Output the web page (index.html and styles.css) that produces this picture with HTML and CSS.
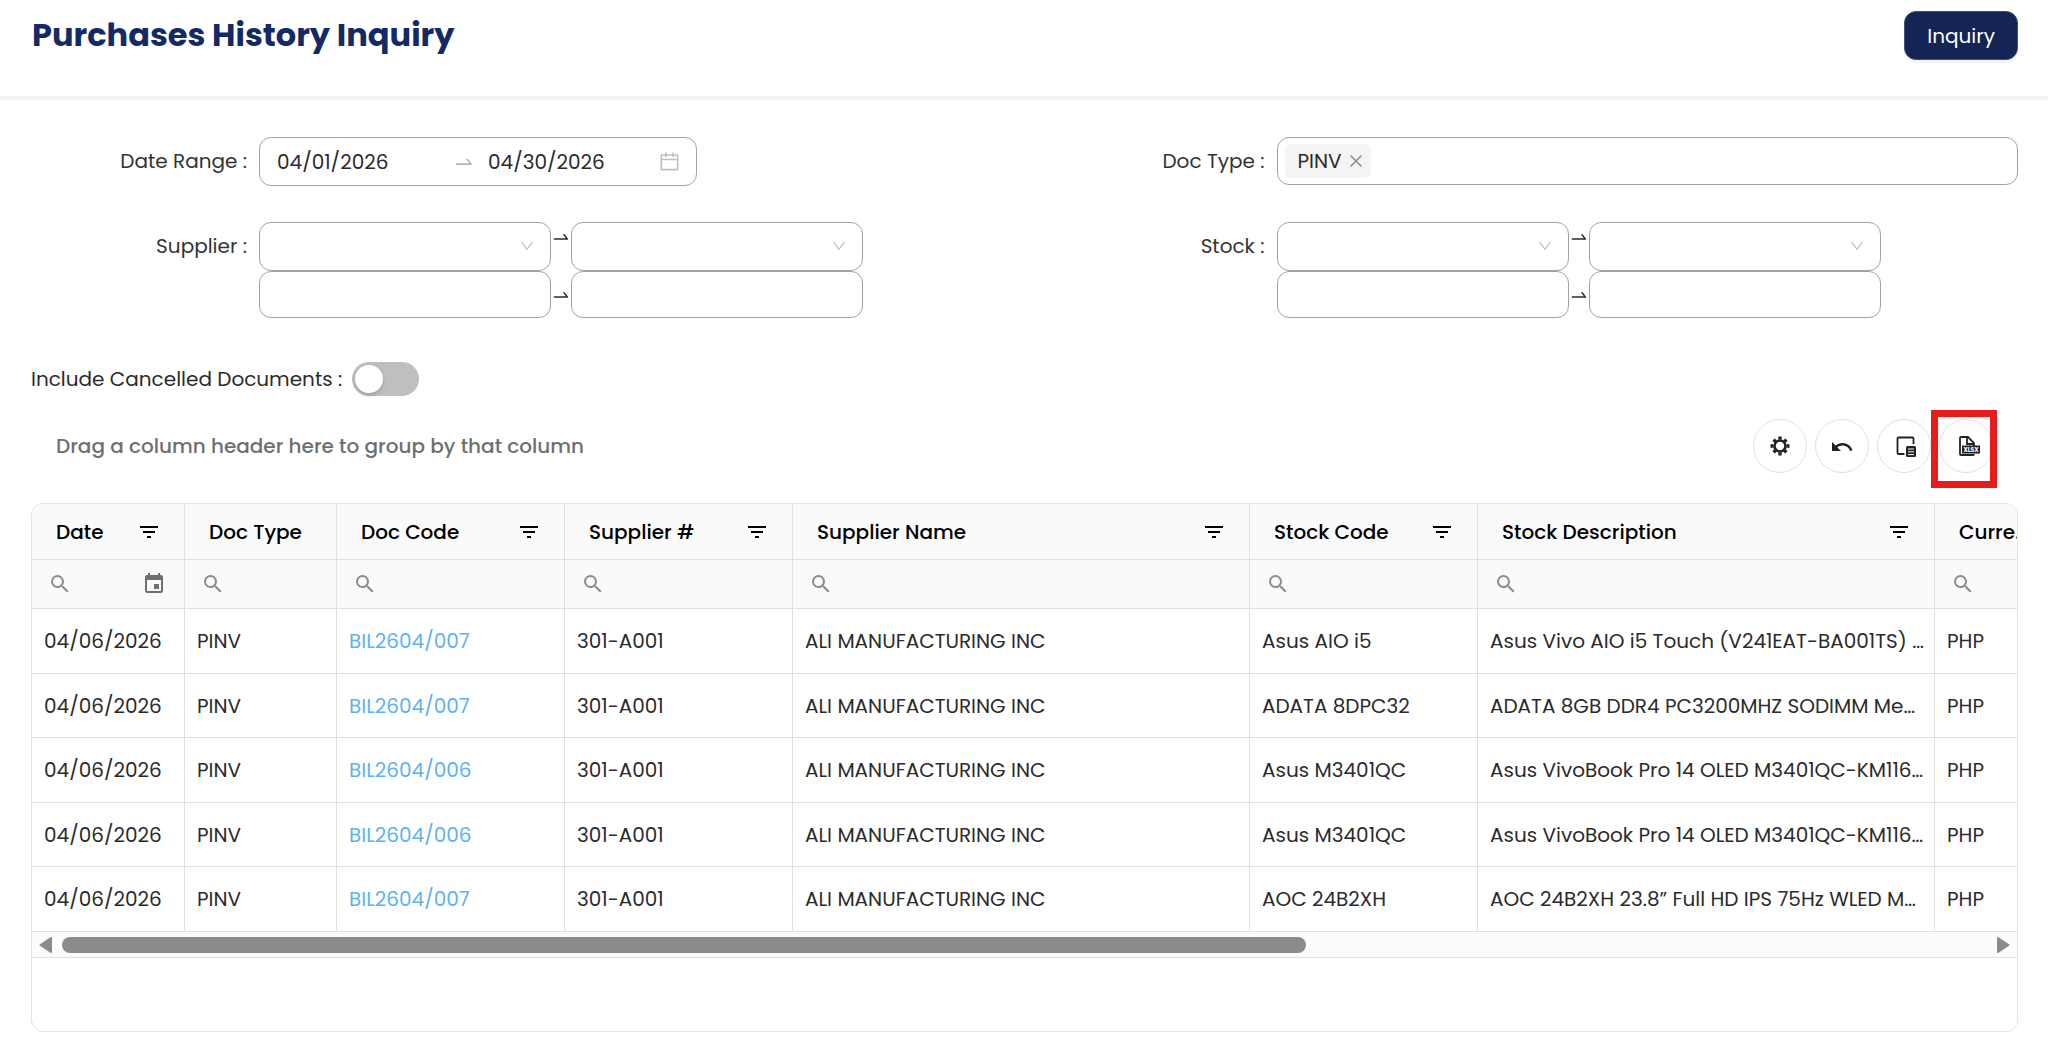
FILE: index.html
```html
<!DOCTYPE html>
<html lang="en">
<head>
<meta charset="utf-8">
<meta name="viewport" content="width=device-width, initial-scale=1">
<title>Purchases History Inquiry</title>
<link rel="stylesheet" href="styles.css">
</head>
<body>
<svg class="sprite" aria-hidden="true">
  <symbol id="i-swap" viewBox="0 0 1024 1024"><path d="M873.1 596.2l-164-208A32 32 0 00684 376h-64.8c-6.7 0-10.4 7.7-6.3 13l144.3 183H152c-4.4 0-8 3.6-8 8v60c0 4.4 3.6 8 8 8h695.9c26.8 0 41.7-30.8 25.2-51.8z"/></symbol>
  <symbol id="i-calendar" viewBox="0 0 1024 1024"><path d="M880 184H712v-64c0-4.400-3.600-8-8-8h-56c-4.400 0-8 3.600-8 8v64H384v-64c0-4.400-3.600-8-8-8h-56c-4.400 0-8 3.600-8 8v64H144c-17.700 0-32 14.300-32 32v664c0 17.700 14.300 32 32 32h736c17.700 0 32-14.300 32-32V216c0-17.700-14.300-32-32-32zm-40 656H184V460h656v380zM184 392V256h128v48c0 4.400 3.600 8 8 8h56c4.400 0 8-3.600 8-8v-48h256v48c0 4.400 3.600 8 8 8h56c4.400 0 8-3.600 8-8v-48h128v136H184z"/></symbol>
  <symbol id="i-down" viewBox="0 0 1024 1024"><path d="M884 256h-75c-5.100 0-9.900 2.500-12.900 6.600L512 654.200 227.900 262.600c-3-4.100-7.800-6.600-12.900-6.600h-75c-6.500 0-10.300 7.400-6.500 12.700l352.600 486.100c12.800 17.600 39 17.600 51.700 0l352.600-486.100c3.900-5.300.1-12.700-6.400-12.700z"/></symbol>
  <symbol id="i-close" viewBox="0 0 16 16"><path d="M2.500 2.500l11 11M13.500 2.500l-11 11" fill="none" stroke="currentColor" stroke-width="1.500"/></symbol>
  <symbol id="i-filter" viewBox="0 0 24 24"><path d="M10 18h4v-2h-4v2zM3 6v2h18V6H3zm3 7h12v-2H6v2z"/></symbol>
  <symbol id="i-search" viewBox="0 0 24 24"><path d="M15.500 14h-.79l-.28-.27A6.470 6.470 0 0016 9.500 6.500 6.500 0 109.500 16c1.610 0 3.090-.59 4.230-1.570l.27.28v.79l5 4.990L20.490 19l-4.990-5zm-6 0C7.010 14 5 11.990 5 9.500S7.010 5 9.500 5 14 7.010 14 9.500 11.990 14 9.500 14z"/></symbol>
  <symbol id="i-event" viewBox="0 0 24 24"><path d="M17 12h-5v5h5v-5zM16 1v2H8V1H6v2H5c-1.110 0-1.990.9-1.990 2L3 19c0 1.100.89 2 2 2h14c1.100 0 2-.9 2-2V5c0-1.100-.9-2-2-2h-1V1h-2zm3 18H5V8h14v11z"/></symbol>
</svg>

<header class="page-header">
  <h1 class="title">Purchases History Inquiry</h1>
  <button class="primary" type="button">Inquiry</button>
</header>

<main class="content">
  <form class="filters">
    <div class="field field-left">
      <label class="label" for="date-from">Date Range :</label>
      <div class="date-range">
        <input id="date-from" class="date-input" type="text" value="04/01/2026">
        <svg class="date-arrow" aria-hidden="true"><use href="#i-swap"/></svg>
        <input class="date-input" type="text" value="04/30/2026" aria-label="Date to">
        <svg class="date-icon" aria-hidden="true"><use href="#i-calendar"/></svg>
      </div>
    </div>
    <div class="field field-right">
      <label class="label" for="doc-type">Doc Type :</label>
      <div class="tag-box">
        <span class="tag">PINV <button class="tag-remove" type="button" aria-label="Remove PINV"><svg aria-hidden="true"><use href="#i-close"/></svg></button></span>
        <input id="doc-type" class="tag-input" type="text">
      </div>
    </div>
    <div class="field field-left">
      <label class="label" for="supplier-from">Supplier :</label>
      <div class="range">
        <div class="select-wrap"><select id="supplier-from" class="box"><option></option></select><svg class="chevron" aria-hidden="true"><use href="#i-down"/></svg></div>
        <svg class="range-arrow range-arrow-top" aria-hidden="true"><use href="#i-swap"/></svg>
        <div class="select-wrap"><select class="box" aria-label="Supplier to"><option></option></select><svg class="chevron" aria-hidden="true"><use href="#i-down"/></svg></div>
        <input class="box" type="text" aria-label="Supplier name from">
        <svg class="range-arrow" aria-hidden="true"><use href="#i-swap"/></svg>
        <input class="box" type="text" aria-label="Supplier name to">
      </div>
    </div>
    <div class="field field-right">
      <label class="label" for="stock-from">Stock :</label>
      <div class="range">
        <div class="select-wrap"><select id="stock-from" class="box"><option></option></select><svg class="chevron" aria-hidden="true"><use href="#i-down"/></svg></div>
        <svg class="range-arrow range-arrow-top" aria-hidden="true"><use href="#i-swap"/></svg>
        <div class="select-wrap"><select class="box" aria-label="Stock to"><option></option></select><svg class="chevron" aria-hidden="true"><use href="#i-down"/></svg></div>
        <input class="box" type="text" aria-label="Stock name from">
        <svg class="range-arrow" aria-hidden="true"><use href="#i-swap"/></svg>
        <input class="box" type="text" aria-label="Stock name to">
      </div>
    </div>
  </form>

  <div class="cancelled">
    <label for="cancelled">Include Cancelled Documents :</label>
    <input id="cancelled" class="switch" type="checkbox" role="switch">
  </div>

  <div class="toolbar">
    <p class="group-hint">Drag a column header here to group by that column</p>
    <div class="tools">
      <button class="tool" type="button" aria-label="Settings">
        <svg viewBox="0 0 28 28"><circle cx="14" cy="14" r="5.500" fill="none" stroke="currentColor" stroke-width="2.600"/><path d="M14 4.500v3M14 20.500v3M4.500 14h3M20.500 14h3M7.600 7.600l2 2M18.400 18.400l2 2M7.600 20.400l2-2M18.400 9.600l2-2" stroke="currentColor" stroke-width="3.400"/></svg>
      </button>
      <button class="tool" type="button" aria-label="Reset">
        <svg viewBox="0 0 28 28"><path transform="translate(2 3)" d="M12.500 8c-2.650 0-5.050.99-6.900 2.600L2 7v9h9l-3.620-3.620c1.390-1.160 3.160-1.880 5.120-1.880 3.540 0 6.550 2.310 7.600 5.500l2.370-.78C21.080 11.030 17.150 8 12.500 8z"/></svg>
      </button>
      <button class="tool" type="button" aria-label="Column chooser">
        <svg viewBox="0 0 28 28"><path d="M14.500 22H8.500a1 1 0 0 1-1-1V6.500a1 1 0 0 1 1-1h14a1 1 0 0 1 1 1V12" fill="none" stroke="currentColor" stroke-width="1.800"/><rect x="16" y="14" width="10" height="11" rx="1.500"/><path d="M18 17h6M18 19.800h6M18 22.600h6" stroke="#fff" stroke-width="1"/></svg>
      </button>
      <button class="tool tool-marked" type="button" aria-label="Export to XLSX">
        <svg viewBox="0 0 28 28"><path d="M22 14v-3l-6-6H9a1 1 0 0 0-1 1v16a1 1 0 0 0 1 1h12a1 1 0 0 0 1-1" fill="none" stroke="currentColor" stroke-width="1.800"/><path d="M15 5v7h7" fill="none" stroke="currentColor" stroke-width="1.800"/><rect x="10" y="13.500" width="18" height="8"/><text class="xlsx" x="19" y="20" text-anchor="middle">XLSX</text></svg>
      </button>
    </div>
  </div>

  <section class="grid">
    <div class="viewport">
      <table class="table">
        <colgroup><col class="w-date"><col class="w-s"><col class="w-m"><col class="w-m"><col class="w-l"><col class="w-m"><col class="w-l"><col class="w-s"></colgroup>
        <thead>
          <tr class="head">
            <th scope="col"><div class="th"><span>Date</span><svg><use href="#i-filter"/></svg></div></th>
            <th scope="col"><div class="th"><span>Doc Type</span></div></th>
            <th scope="col"><div class="th"><span>Doc Code</span><svg><use href="#i-filter"/></svg></div></th>
            <th scope="col"><div class="th"><span>Supplier #</span><svg><use href="#i-filter"/></svg></div></th>
            <th scope="col"><div class="th"><span>Supplier Name</span><svg><use href="#i-filter"/></svg></div></th>
            <th scope="col"><div class="th"><span>Stock Code</span><svg><use href="#i-filter"/></svg></div></th>
            <th scope="col"><div class="th"><span>Stock Description</span><svg><use href="#i-filter"/></svg></div></th>
            <th scope="col"><div class="th"><span>Currency</span><svg><use href="#i-filter"/></svg></div></th>
          </tr>
          <tr class="search">
            <td><div class="sc"><svg><use href="#i-search"/></svg><input type="text" aria-label="Filter date"><svg class="event"><use href="#i-event"/></svg></div></td>
            <td><div class="sc"><svg><use href="#i-search"/></svg><input type="text" aria-label="Filter doc type"></div></td>
            <td><div class="sc"><svg><use href="#i-search"/></svg><input type="text" aria-label="Filter doc code"></div></td>
            <td><div class="sc"><svg><use href="#i-search"/></svg><input type="text" aria-label="Filter supplier number"></div></td>
            <td><div class="sc"><svg><use href="#i-search"/></svg><input type="text" aria-label="Filter supplier name"></div></td>
            <td><div class="sc"><svg><use href="#i-search"/></svg><input type="text" aria-label="Filter stock code"></div></td>
            <td><div class="sc"><svg><use href="#i-search"/></svg><input type="text" aria-label="Filter stock description"></div></td>
            <td><div class="sc"><svg><use href="#i-search"/></svg><input type="text" aria-label="Filter currency"></div></td>
          </tr>
        </thead>
        <tbody>
          <tr><td>04/06/2026</td><td>PINV</td><td><a href="#">BIL2604/007</a></td><td>301-A001</td><td>ALI MANUFACTURING INC</td><td>Asus AIO i5</td><td>Asus Vivo AIO i5 Touch (V241EAT-BA001TS) …</td><td>PHP</td></tr>
          <tr><td>04/06/2026</td><td>PINV</td><td><a href="#">BIL2604/007</a></td><td>301-A001</td><td>ALI MANUFACTURING INC</td><td>ADATA 8DPC32</td><td>ADATA 8GB DDR4 PC3200MHZ SODIMM Me…</td><td>PHP</td></tr>
          <tr><td>04/06/2026</td><td>PINV</td><td><a href="#">BIL2604/006</a></td><td>301-A001</td><td>ALI MANUFACTURING INC</td><td>Asus M3401QC</td><td>Asus VivoBook Pro 14 OLED M3401QC-KM116…</td><td>PHP</td></tr>
          <tr><td>04/06/2026</td><td>PINV</td><td><a href="#">BIL2604/006</a></td><td>301-A001</td><td>ALI MANUFACTURING INC</td><td>Asus M3401QC</td><td>Asus VivoBook Pro 14 OLED M3401QC-KM116…</td><td>PHP</td></tr>
          <tr><td>04/06/2026</td><td>PINV</td><td><a href="#">BIL2604/007</a></td><td>301-A001</td><td>ALI MANUFACTURING INC</td><td>AOC 24B2XH</td><td>AOC 24B2XH 23.8” Full HD IPS 75Hz WLED M…</td><td>PHP</td></tr>
        </tbody>
      </table>
    </div>
    <div class="scrollbar">
      <button class="scroll-btn" type="button" aria-label="Scroll left"><svg viewBox="0 0 13 16"><path d="M12 1v14L1.500 8z" stroke="currentColor" stroke-width="2" stroke-linejoin="round"/></svg></button>
      <div class="track"><div class="thumb"></div></div>
      <button class="scroll-btn" type="button" aria-label="Scroll right"><svg viewBox="0 0 13 16"><path d="M1 1v14L11.500 8z" stroke="currentColor" stroke-width="2" stroke-linejoin="round"/></svg></button>
    </div>
    <div class="grid-footer"></div>
  </section>
</main>
</body>
</html>
```
FILE: styles.css
```css
*, *::before, *::after { box-sizing: border-box; }

body {
  margin: 0;
  background: #fff;
  color: #2b2b2b;
  font: 400 20px/30px Poppins, "Open Sans", sans-serif;
}

svg { display: block; flex: none; fill: currentColor; }
button, input, select { font: inherit; color: inherit; }
button { cursor: pointer; }
input, select { min-width: 0; }
.sprite { display: none; }

/* Header */
.page-header {
  display: flex;
  align-items: flex-start;
  justify-content: space-between;
  padding: 11px 30px 36px 32px;
  border-bottom: 4px solid #f2f2f2;
}
.title { margin: 0; font-size: 32px; font-weight: 700; line-height: 48px; color: #142a66; }
.primary {
  height: 49px;
  padding: 0 22px;
  border: 1px solid #44507a;
  border-radius: 12px;
  background: #142454;
  color: #fff;
  line-height: 28px;
  box-shadow: 0 3px 0 #f4f4f6;
}

.content { padding: 37px 30px 6px 31px; }

/* Filters */
.filters {
  display: grid;
  grid-template-columns: 1fr 1fr;
  row-gap: 36px;
}
.field { display: grid; align-items: start; column-gap: 12px; }
.field-left { grid-template-columns: 216px minmax(0, 1fr); }
.field-right { grid-template-columns: 240px minmax(0, 1fr); }
.label { text-align: right; line-height: 49px; color: #333; }

.date-range, .tag-box, .box {
  border: 1px solid #a3a3a3;
  border-radius: 12px;
  background: #fff;
}
.date-range {
  display: flex;
  align-items: center;
  width: 438px;
  max-width: 100%;
  height: 49px;
  padding: 0 15px 0 17px;
}
.date-input { flex: 1; width: 0; height: 40px; padding: 0; border: 0; outline: 0; background: none; line-height: 28px; }
.date-arrow { width: 22px; height: 22px; margin: 0 13px 0 6px; color: #b5b5b5; }
.date-icon { width: 23px; height: 23px; color: #bfbfbf; }

.tag-box { display: flex; align-items: center; height: 48px; padding: 0 7px; }
.tag {
  display: flex;
  align-items: center;
  gap: 6px;
  height: 34px;
  padding: 0 7px 0 13px;
  border-radius: 6px;
  background: #f4f4f4;
}
.tag-remove { padding: 0; border: 0; background: none; color: #8c8c8c; }
.tag-remove svg { width: 16px; height: 16px; }
.tag-input { flex: 1; height: 40px; border: 0; outline: 0; background: none; }

.range {
  display: grid;
  grid-template-columns: 1fr 20px 1fr;
  grid-template-rows: 49px 47px;
  align-items: center;
  max-width: 604px;
}
.box { display: block; width: 100%; height: 49px; padding: 0 16px; appearance: none; }
.range > .box { height: 47px; }
.select-wrap { position: relative; }
.chevron {
  position: absolute;
  top: 16px;
  right: 16px;
  width: 16px;
  height: 16px;
  color: #bfbfbf;
  pointer-events: none;
}
.range-arrow { width: 20px; height: 20px; }
.range-arrow-top { align-self: start; margin-top: 5px; }

.cancelled { display: flex; align-items: center; gap: 10px; margin-top: 44px; height: 34px; }
.switch {
  width: 67px;
  height: 34px;
  margin: 0;
  padding: 3px;
  border-radius: 17px;
  background: #bfbfbf;
  appearance: none;
}
.switch::before {
  content: "";
  display: block;
  width: 28px;
  height: 28px;
  border-radius: 50%;
  background: #fff;
  box-shadow: 0 2px 4px rgba(0, 35, 11, .2);
}

/* Grid toolbar */
.toolbar {
  display: flex;
  align-items: center;
  justify-content: space-between;
  margin: 23px 0 30px;
  padding: 0 25px;
}
.group-hint { margin: 0; font-weight: 500; color: #6f6f6f; }
.tools { display: flex; gap: 8px; }
.tool {
  position: relative;
  display: grid;
  place-items: center;
  width: 54px;
  height: 54px;
  padding: 0;
  border: 1px solid #e0e0e0;
  border-radius: 50%;
  background: #fff;
  color: #222;
}
.tool svg { width: 28px; height: 28px; }
.xlsx { font-size: 6px; font-weight: 700; fill: #fff; }
.tool-marked::after {
  content: "";
  position: absolute;
  top: -10px;
  left: -9px;
  width: 66px;
  height: 78px;
  border: 7px solid #e81c1c;
}

/* Data grid */
.grid { border: 1px solid #e4e4e4; border-radius: 12px; overflow: hidden; }
.viewport { overflow: hidden; }
.table { width: 2055px; border-collapse: separate; border-spacing: 0; table-layout: fixed; }
.w-date { width: 153px; }
.w-s { width: 152px; }
.w-m { width: 228px; }
.w-l { width: 457px; }
.table th, .table td {
  padding: 0 4px 0 12px;
  border-right: 1px solid #e0e0e0;
  border-bottom: 1px solid #e0e0e0;
  text-align: left;
  overflow: hidden;
  text-overflow: ellipsis;
  white-space: nowrap;
}
.table .head th { height: 56px; padding: 0 23px 0 24px; background: #fafafa; color: #000; font-weight: 500; }
.table .search td { height: 49px; padding: 0 18px 0 16px; background: #fafafa; }
.table tbody td { height: 65px; }
.table tbody tr:nth-child(even) td { height: 64px; }
.th { display: flex; align-items: center; justify-content: space-between; gap: 4px; }
.th span { overflow: hidden; text-overflow: ellipsis; }
.th svg, .sc svg { width: 24px; height: 24px; }
.sc { display: flex; align-items: center; color: #8c8c8c; }
.sc input { flex: 1; width: 0; height: 30px; padding: 0; border: 0; outline: 0; background: none; }
.sc .event { color: #707070; }
.table a { color: #5db2f5; text-decoration: none; }

.scrollbar {
  display: flex;
  align-items: center;
  gap: 10px;
  height: 26px;
  padding: 0 7px;
  border-bottom: 1px solid #e0e0e0;
  background: #fcfcfc;
  color: #8b8b8b;
}
.scroll-btn { padding: 0; border: 0; background: none; }
.scroll-btn svg { width: 13px; height: 16px; }
.track { flex: 1; }
.thumb { width: 64.6%; height: 16px; border-radius: 8px; background: #8b8b8b; }
.grid-footer { height: 73px; }
```
